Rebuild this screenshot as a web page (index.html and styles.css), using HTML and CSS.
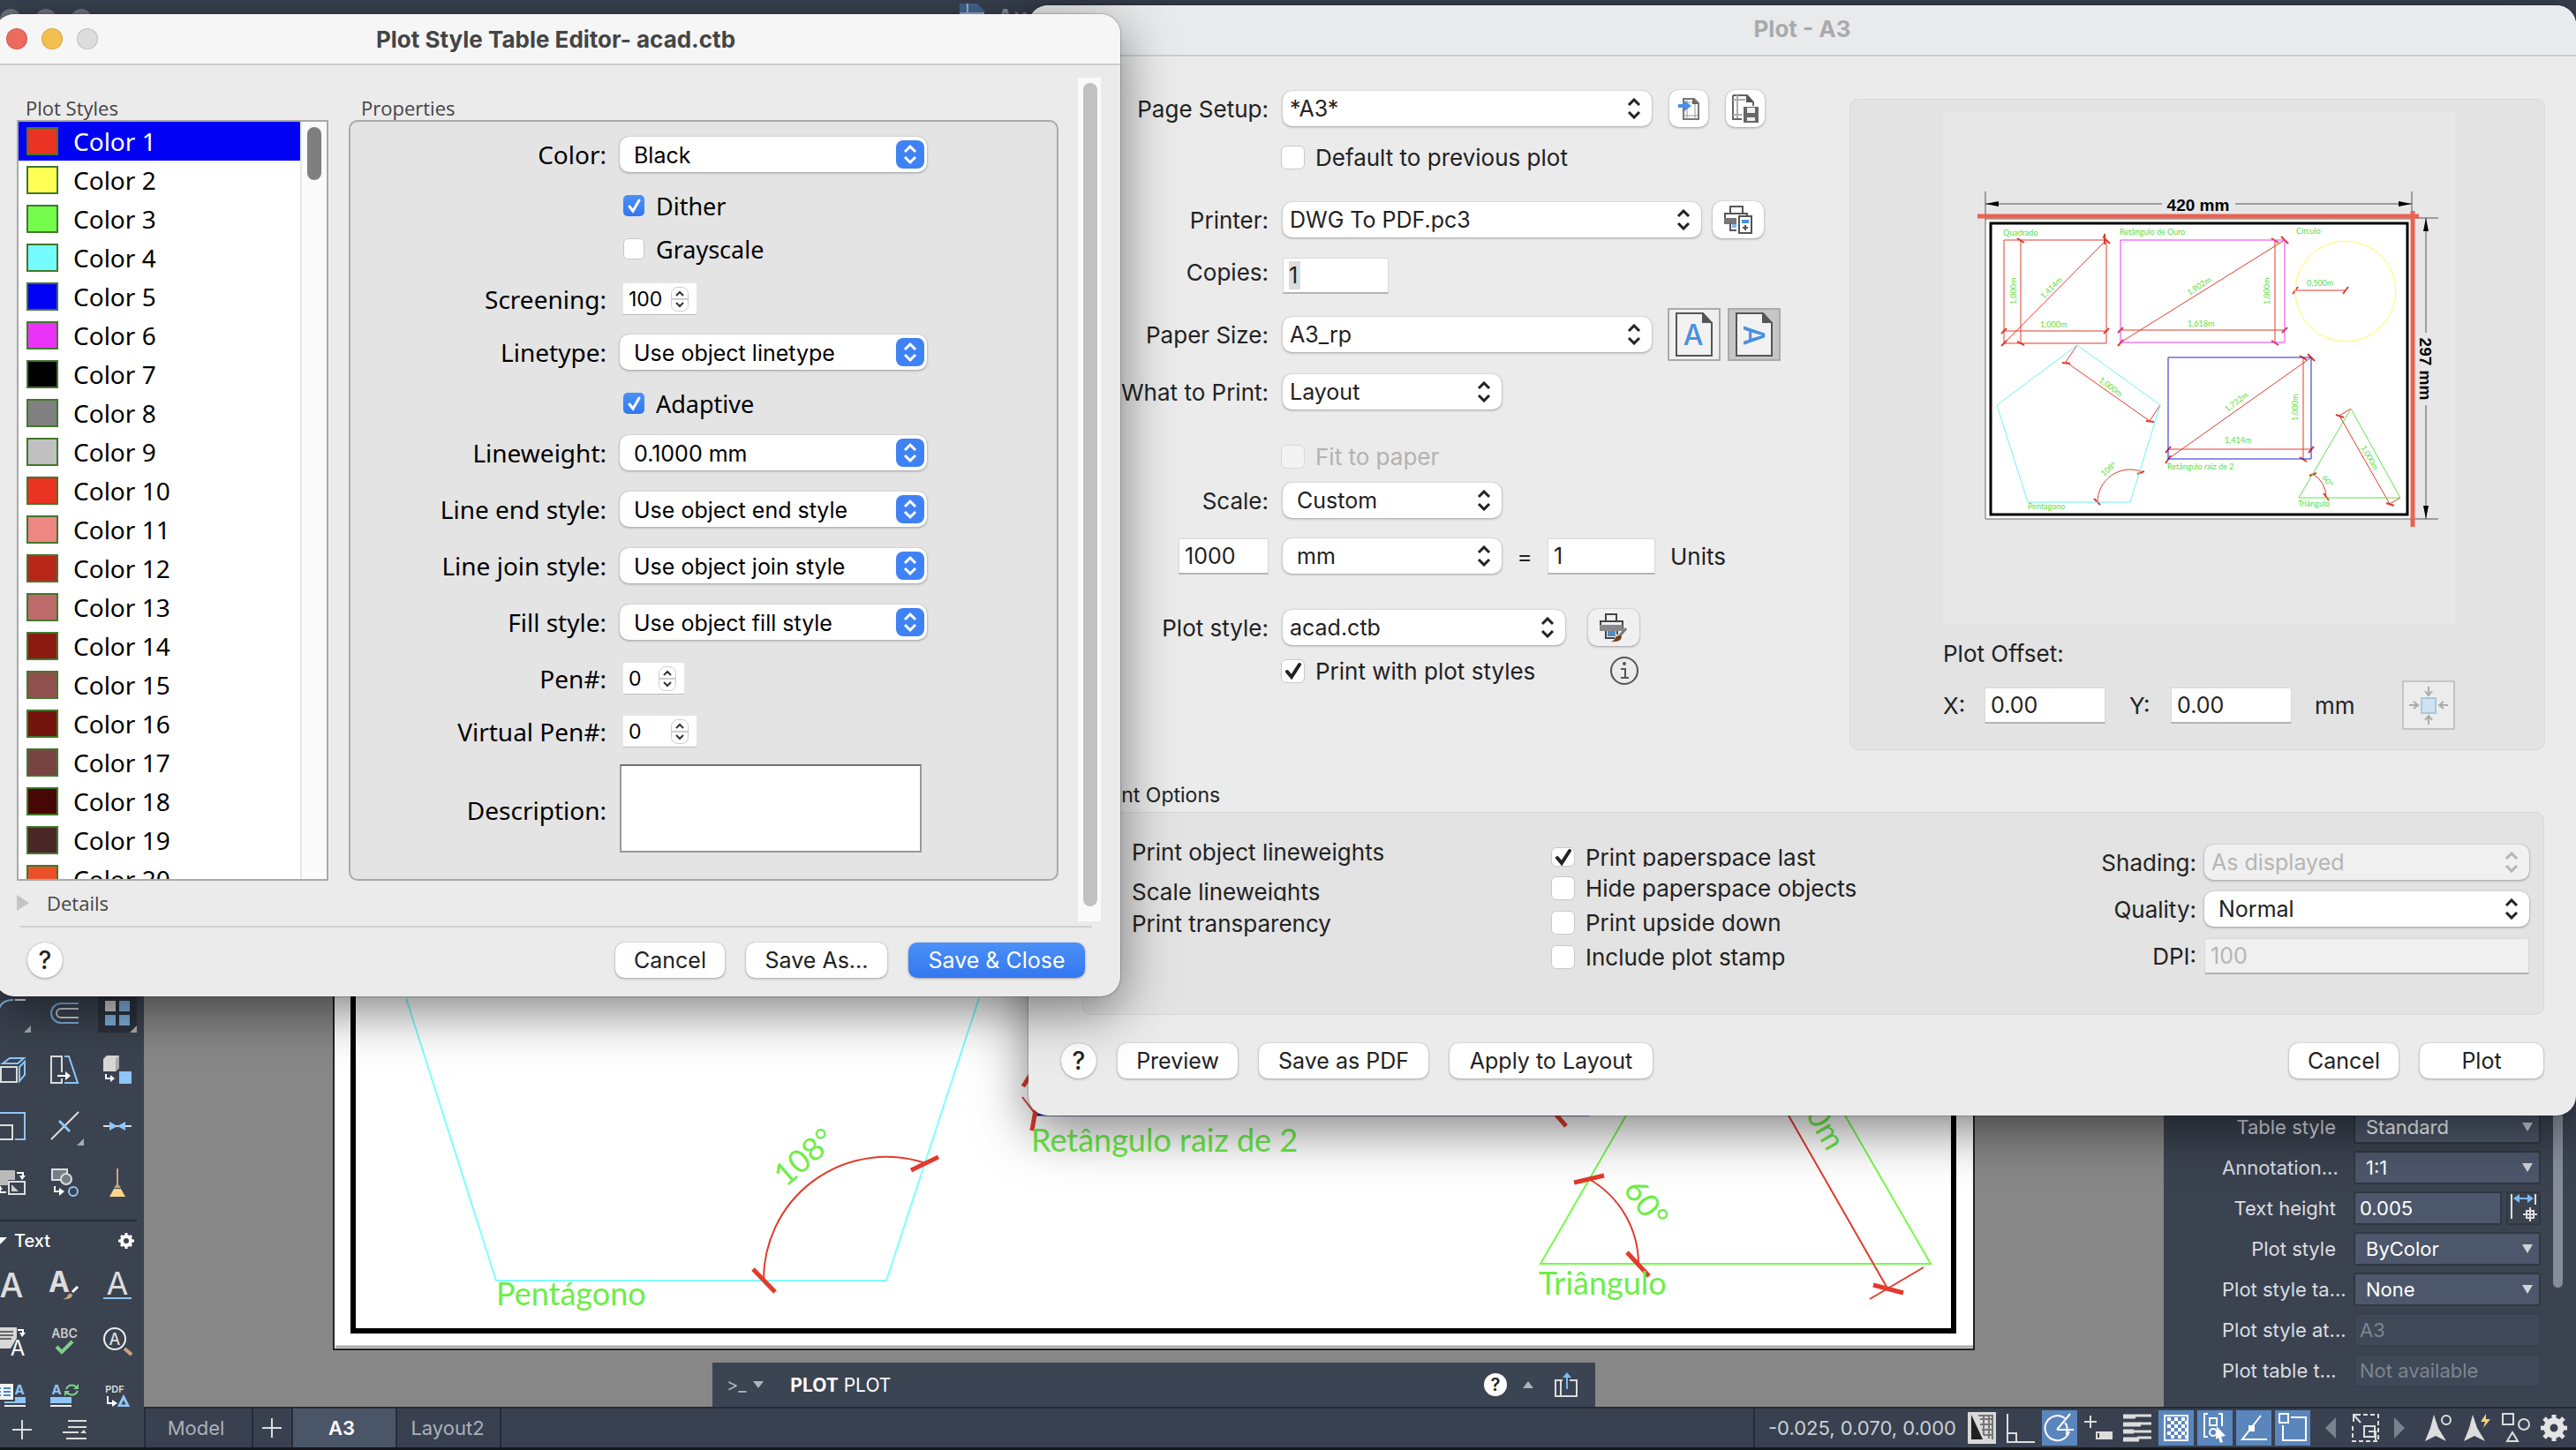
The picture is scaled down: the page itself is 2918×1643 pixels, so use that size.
FILE: index.html
```html
<!DOCTYPE html>
<html lang="en">
<head>
<meta charset="utf-8">
<title>Plot Style Table Editor - acad.ctb</title>
<link rel="stylesheet" href="styles.css">
</head>
<body>
<div class="app">
  <header class="app-title">
    <span class="app-dots"><i></i><i></i><i></i></span>
    <span class="app-doc"><svg width="28" height="24" viewBox="0 0 28 24"><path d="M0 0h20l8 8v16H0z" fill="#46658f"/><path d="M9 0v24M0 11h28" stroke="#9fb3cc" stroke-width="2"/></svg>Au</span>
  </header>

  <aside class="palette">
    <div class="tools tools-modify">
      <button type="button" class="tool" aria-label="Fillet"><svg viewBox="0 0 32 32"><path d="M1 16Q2 1 18 1" fill="none" stroke="#8bbdec" stroke-width="2"/><path d="M20 1h12" stroke="#ddd" stroke-width="2"/><path d="M38 30v8h-8z" fill="#a9acb1"/></svg></button>
      <button type="button" class="tool" aria-label="Offset"><svg viewBox="0 0 32 32"><path d="M32 5H12a11 11 0 0 0 0 22h20" fill="none" stroke="#7fb0df" stroke-width="2"/><path d="M32 11H12a5 5 0 0 0 0 10h20" fill="none" stroke="#ccc" stroke-width="2"/></svg></button>
      <button type="button" class="tool tool-on" aria-label="Array"><svg viewBox="0 0 32 32"><path d="M2 2h12v12H2z" fill="#ccc"/><path d="M18 2h12v12H18zM2 18h12v12H2zM18 18h12v12H18z" fill="#7fb0df"/><path d="M38 30v8h-8z" fill="#a9acb1"/></svg></button>
      <button type="button" class="tool" aria-label="Extrude"><svg viewBox="0 0 32 32" fill="none" stroke-width="2"><path d="M4 13h18v17H4z" stroke="#ddd"/><path d="M6 9l8-6h16l-7 6zM25 13l6-6v15l-6 7z" stroke="#8ec6f8"/></svg></button>
      <button type="button" class="tool" aria-label="Stretch"><svg viewBox="0 0 32 32" fill="none" stroke-width="2"><path d="M13 19V1H1v30h12v-5" stroke="#ddd"/><path d="M16 1h5l10 30H16" stroke="#8ec6f8"/><path d="M8 23h11" stroke="#fff"/><path d="M17 18l6 5-6 5z" fill="#fff"/></svg></button>
      <button type="button" class="tool" aria-label="Convert solid"><svg viewBox="0 0 32 32"><path d="M0 4l4-4h14v14l-4 4H0z" fill="#d8d8d8"/><path d="M14 18V4l4-4v14z" fill="#aaa"/><path d="M18 18h14v14H18z" fill="#8ec6f8"/><path d="M3 21v5h6" fill="none" stroke="#fff" stroke-width="2"/><path d="M8 22l5 4-5 4z" fill="#fff"/></svg></button>
      <button type="button" class="tool" aria-label="Scale"><svg viewBox="0 0 32 32" fill="none" stroke-width="2"><path d="M1 1h30v30H20" stroke="#8ec6f8"/><path d="M1 15h16v16H1z" stroke="#ddd"/></svg></button>
      <button type="button" class="tool" aria-label="Break"><svg viewBox="0 0 32 32"><path d="M1 31L32 0" stroke="#ddd" stroke-width="2"/><path d="M10 10l12 12" stroke="#8ec6f8" stroke-width="3"/><path d="M38 30v8h-8z" fill="#a9acb1"/></svg></button>
      <button type="button" class="tool" aria-label="Join"><svg viewBox="0 0 32 32"><path d="M0 16h32" stroke="#ddd" stroke-width="2"/><path d="M7 11l9 5-9 5zM25 11l-9 5 9 5z" fill="#8ec6f8"/></svg></button>
      <button type="button" class="tool" aria-label="Change space"><svg viewBox="0 0 32 32"><path d="M0 2h20v11h-8v6H0z" fill="#bbb"/><path d="M13 15h18v14H13z" fill="none" stroke="#ddd" stroke-width="2"/><path d="M16 18v8h8z" fill="#ccc"/><path d="M22 5h7v4M10 27H3v-4" fill="none" stroke="#fff" stroke-width="2"/><path d="M25 8h7l-4 5zM0 24h6l-3-5z" fill="#fff"/></svg></button>
      <button type="button" class="tool" aria-label="Copy nested"><svg viewBox="0 0 32 32" fill="none" stroke-width="2"><path d="M2 1h17v12H2z" fill="#777c85" stroke="#ddd"/><circle cx="18" cy="12" r="6" fill="#777c85" stroke="#ddd"/><circle cx="26" cy="26" r="5" stroke="#8ec6f8"/><path d="M5 20v6h6" stroke="#fff"/><path d="M10 22l6 4-6 5z" fill="#fff"/></svg></button>
      <button type="button" class="tool" aria-label="Purge"><svg viewBox="0 0 32 32"><path d="M15 0h2v18l3 4h-8l3-4z" fill="#c9a67a"/><path d="M12 23h8l5 9H7z" fill="#fbd38b"/></svg></button>
    </div>
    <div class="palette-head"><span class="tri-down"></span><span>Text</span>
      <button type="button" class="gear" aria-label="Text settings"><svg viewBox="0 0 20 20"><circle cx="10" cy="10" r="5" fill="none" stroke="#fff" stroke-width="4"/><path d="M10 1v4M10 15v4M1 10h4M15 10h4M4 4l2 2M14 14l2 2M4 16l2-2M14 6l2-2" stroke="#fff" stroke-width="3"/></svg></button>
    </div>
    <div class="tools tools-text">
      <button type="button" class="tool" aria-label="Multiline text"><svg viewBox="0 0 32 32"><text x="16" y="30" text-anchor="middle" font-size="38" font-weight="500" fill="#ddd">A</text></svg></button>
      <button type="button" class="tool" aria-label="Text style"><svg viewBox="0 0 32 32"><text x="10" y="24" text-anchor="middle" font-size="32" font-weight="700" fill="#ddd">A</text><path d="M31 18l-6 6" stroke="#fff" stroke-width="3"/><path d="M14 32q5-1 6-5 3-3 5 0 0 6-11 5z" fill="#c9a67a"/></svg></button>
      <button type="button" class="tool" aria-label="Single line text"><svg viewBox="0 0 32 32"><text x="16" y="27" text-anchor="middle" font-size="36" fill="#ddd">A</text><path d="M0 31h32" stroke="#8ec6f8" stroke-width="2"/></svg></button>
      <button type="button" class="tool" aria-label="Convert to text"><svg viewBox="0 0 32 32"><path d="M0 0h22v12l-7 12H0z" fill="#d8d8d8"/><path d="M3 5h15M3 9h15M3 13h13" stroke="#666" stroke-width="2"/><text x="23" y="32" text-anchor="middle" font-size="24" fill="#fff">A</text><path d="M23 3h6v4" fill="none" stroke="#fff" stroke-width="2"/><path d="M25 6h7l-4 5z" fill="#fff"/></svg></button>
      <button type="button" class="tool" aria-label="Spell check"><svg viewBox="0 0 32 32"><text x="16" y="12" text-anchor="middle" font-size="14" font-weight="600" fill="#ccc">ABC</text><path d="M7 22l6 6 12-12" fill="none" stroke="#7fd08a" stroke-width="4"/></svg></button>
      <button type="button" class="tool" aria-label="Find text"><svg viewBox="0 0 32 32"><circle cx="13" cy="13" r="12" fill="none" stroke="#eee" stroke-width="2"/><path d="M24 24l8 7" stroke="#c9a67a" stroke-width="4"/><text x="13" y="20" text-anchor="middle" font-size="18" font-weight="500" fill="#ddd">A</text></svg></button>
      <button type="button" class="tool" aria-label="Text list"><svg viewBox="0 0 32 32"><path d="M0 0h18v18H0z" fill="#f3f3f3"/><path d="M2 5h2M2 9h2M2 13h2M7 5h8M7 9h8M7 13h8" stroke="#4a86c8" stroke-width="2"/><text x="25" y="12" text-anchor="middle" font-size="15" font-weight="700" fill="#8ec6f8">A</text><path d="M8 20h12v-5h12v7H8z" fill="#8ec6f8"/><path d="M8 25h24" stroke="#eee" stroke-width="2"/></svg></button>
      <button type="button" class="tool" aria-label="Update text"><svg viewBox="0 0 32 32"><text x="7" y="12" text-anchor="middle" font-size="15" font-weight="700" fill="#8ec6f8">A</text><path d="M0 15h24v7H0z" fill="#8ec6f8"/><path d="M0 25h24" stroke="#eee" stroke-width="2"/><path d="M18 6q3-6 9-4l3 2M31 8q-3 6-9 4l-4-2" fill="none" stroke="#7fd08a" stroke-width="2"/><path d="M32 0v6h-6zM16 14V8h6z" fill="#7fd08a"/></svg></button>
      <button type="button" class="tool" aria-label="Import PDF text"><svg viewBox="0 0 32 32"><text x="13" y="10" text-anchor="middle" font-size="11" font-weight="600" fill="#ddd">PDF</text><path d="M5 14v8h7" fill="none" stroke="#fff" stroke-width="2"/><path d="M10 18l6 4-6 4z" fill="#fff"/><path d="M23 15l5 10H18z" fill="none" stroke="#8ec6f8" stroke-width="3"/></svg></button>
    </div>
    <div class="palette-foot">
      <button type="button" class="tool" aria-label="Add palette"><svg viewBox="0 0 32 32"><path d="M16 5v22M5 16h22" stroke="#ddd" stroke-width="2"/></svg></button>
      <button type="button" class="tool" aria-label="Palette list"><svg viewBox="0 0 32 32"><path d="M8 6h21M8 13h21M2 19h18M6 26h23" stroke="#ddd" stroke-width="2"/><path d="M22 20h7l-3-4z" fill="#ddd"/></svg></button>
    </div>
  </aside>

  <main class="canvas">
    <svg class="sheet" viewBox="163 28 2288 1566" preserveAspectRatio="xMinYMax meet">
      <path d="M378 28h1858v1501H378z" fill="#fff" stroke="#222" stroke-width="2"/>
      <path d="M380 1526h1855" stroke="#aaa" stroke-width="3"/>
      <path d="M400 28v1480h1813V28" fill="none" stroke="#000" stroke-width="6"/>
      <g fill="none" stroke="#7dffff" stroke-width="2"><path d="M460 1131L562 1451H1004L1109 1131"/></g>
      <g fill="none" stroke="#75fb4c" stroke-width="2"><path d="M1842 1264L1745 1432H2187L2090 1264"/></g>
      <path d="M1172 1263H1800" stroke="#22a" stroke-width="3"/>
      <g fill="none" stroke="#e23a2c" stroke-width="2">
        <path d="M865 1451A139 139 0 0 1 1048 1318"/>
        <path d="M1800 1336A111 111 0 0 1 1856 1432"/>
        <path d="M2026 1264L2137 1458M2118 1472L2179 1436M1158 1243L1174 1264"/>
      </g>
      <path d="M853 1438l25 26M1032 1326l31-15M1783 1340l34-8M1843 1419l25 27M2122 1456l34 9M1159 1231l10-16M1173 1258l-4 23M1760 1260l14 16" stroke="#e23a2c" stroke-width="5"/>
      <g class="cad-text">
        <text x="562" y="1479">Pentágono</text>
        <text x="1168" y="1305">Retângulo raiz de 2</text>
        <text x="1743" y="1467">Triângulo</text>
        <text x="890" y="1346" transform="rotate(-41 890 1346)">108°</text>
        <text x="1838" y="1348" transform="rotate(54 1838 1348)">60°</text>
        <text x="2070" y="1306" transform="rotate(60 2070 1306)" text-anchor="end">1,000m</text>
      </g>
    </svg>
    <div class="command">
      <span class="prompt">&gt;_</span><span class="caret caret-down"></span>
      <span class="command-text"><b>PLOT</b> PLOT</span>
      <button type="button" class="command-help" aria-label="Help">?</button>
      <span class="caret caret-up"></span>
      <button type="button" class="plain" aria-label="Expand history"><svg width="26" height="30" viewBox="0 0 26 30" fill="none" stroke="#ddd" stroke-width="2"><path d="M9 10H1v18h24V10h-8"/><path d="M7 10v18"/><path d="M14 20V6" stroke="#7db9f2" stroke-width="2"/><path d="M9 7l5-6 5 6z" fill="#7db9f2" stroke="none"/></svg></button>
    </div>
  </main>

  <aside class="side">
    <form class="side-form">
      <label for="s1">Table style</label><select id="s1"><option>Standard</option></select>
      <label for="s2">Annotation...</label><select id="s2"><option>1:1</option></select>
      <label for="s3">Text height</label><span class="side-pair"><input id="s3" value="0.005"><button type="button" aria-label="Pick height"><svg width="32" height="34" viewBox="0 0 32 34" fill="none" stroke="#ddd" stroke-width="2"><path d="M2 1v28M29 1v12M15 24h16M23 16v16M19 20h8v8h-8z"/><path d="M6 6h19" stroke="#7db9f2"/><path d="M11 1L4 6l7 5zM20 1l7 5-7 5z" fill="#7db9f2" stroke="none"/></svg></button></span>
      <label for="s4">Plot style</label><select id="s4"><option>ByColor</option></select>
      <label for="s5">Plot style ta...</label><select id="s5"><option>None</option></select>
      <label for="s6">Plot style at...</label><input id="s6" value="A3" disabled>
      <label for="s7">Plot table t...</label><input id="s7" value="Not available" disabled>
    </form>
    <div class="side-scroll"></div>
  </aside>

  <footer class="status">
    <nav class="tabs">
      <button type="button" class="tab tab-model">Model</button>
      <button type="button" class="tab tab-add" aria-label="New layout"><svg width="24" height="24" viewBox="0 0 24 24"><path d="M12 1v22M1 12h22" stroke="#ddd" stroke-width="2"/></svg></button>
      <button type="button" class="tab tab-current">A3</button>
      <button type="button" class="tab">Layout2</button>
    </nav>
    <output class="coords">-0.025, 0.070, 0.000</output>
    <div class="toggles">
      <button type="button" aria-label="Grid"><svg viewBox="0 0 32 36"><path d="M0 0h32v36H0z" fill="#d8d8d8"/><path d="M4 3v28h13z" fill="#222"/><path d="M14 8h14M14 14h14M16 20h12M18 26h10M18 4v22M24 4v26M12 4h16v27" fill="none" stroke="#777" stroke-width="2"/></svg></button>
      <button type="button" aria-label="Ortho"><svg viewBox="0 0 32 36" fill="none" stroke="#ddd" stroke-width="2"><path d="M1 2v32h31M1 24h10v10"/></svg></button>
      <button type="button" class="on" aria-label="Polar"><svg viewBox="0 0 32 36" fill="none" stroke="#fff" stroke-width="2"><path d="M22 7A14 14 0 1 0 27 22M13 20L28 2M13 20h19M22 12q4 4 2 14"/></svg></button>
      <button type="button" aria-label="Dynamic input"><svg viewBox="0 0 32 36"><path d="M7 4v14M0 11h14" stroke="#ddd" stroke-width="2"/><path d="M13 22h19v9H13z" fill="#ddd"/><path d="M16 24v5" stroke="#444" stroke-width="2"/></svg></button>
      <button type="button" aria-label="Lineweight"><svg viewBox="0 0 32 36" fill="none" stroke="#ddd"><path d="M0 5h14M0 14h20M0 22h12M0 31h18" stroke-width="5"/><path d="M14 4h18M18 13h14M12 22h20M16 29h16" stroke-width="3"/></svg></button>
      <button type="button" class="on" aria-label="Transparency"><svg viewBox="0 0 32 36" fill="none" stroke="#fff" stroke-width="2"><path d="M3 4h26v28H3z"/><path d="M6 8h20M10 12h20M6 16h20M10 20h18M6 24h20M10 28h18" stroke-width="4" stroke-dasharray="4 4"/></svg></button>
      <button type="button" class="on" aria-label="Selection cycling"><svg viewBox="0 0 32 36" fill="none" stroke="#fff" stroke-width="2"><path d="M8 2H4v26h4M20 2h4v14M10 7h8v8h-8z"/><circle cx="14" cy="23" r="4"/><path d="M18 16l10 11-5 1 2 6-3 1-2-6-3 2z" fill="#fff" stroke="none"/></svg></button>
      <button type="button" class="on" aria-label="Object snap tracking"><svg viewBox="0 0 32 36" fill="none" stroke="#fff" stroke-width="2"><path d="M24 4L3 31h28"/><path d="M10 15h7v7h-7z" fill="#fff" stroke="none"/></svg></button>
      <button type="button" class="on" aria-label="Object snap"><svg viewBox="0 0 32 36" fill="none" stroke="#fff" stroke-width="2"><path d="M1 2h10v10H1zM14 6h17v26H5V15"/></svg></button>
      <button type="button" class="narrow" aria-label="Previous scale"><svg viewBox="0 0 12 36"><path d="M12 6v24L0 18z" fill="#7a818d"/></svg></button>
      <button type="button" class="wide" aria-label="Annotation scale"><svg viewBox="0 0 32 36" fill="none" stroke="#ddd" stroke-width="2"><path d="M14 3h17v30H2V14" stroke-dasharray="5 3"/><path d="M3 3l8 9M3 11V3h8M15 16h12v12H15zM20 22h8v10"/></svg></button>
      <button type="button" class="narrow" aria-label="Next scale"><svg viewBox="0 0 12 36"><path d="M0 6v24l12-12z" fill="#7a818d"/></svg></button>
      <button type="button" aria-label="Annotation visibility"><svg viewBox="0 0 32 36"><path d="M12 3l5 15 9 15-12-6-12 6 6-15z" fill="#ddd"/><ellipse cx="26" cy="9" rx="5" ry="5" fill="none" stroke="#ddd" stroke-width="2"/></svg></button>
      <button type="button" aria-label="Auto scale"><svg viewBox="0 0 32 36"><path d="M12 3l5 15 9 15-12-6-12 6 6-15z" fill="#ddd"/><path d="M27 2l-6 9h5l-2 7 8-10h-5z" fill="#f7cf7a"/></svg></button>
      <button type="button" aria-label="Isolate"><svg viewBox="0 0 32 36" fill="none" stroke="#ddd" stroke-width="2"><path d="M2 2h12v12H2zM13 23l6 10H7z"/><circle cx="26" cy="14" r="6"/></svg></button>
      <button type="button" aria-label="Settings"><svg viewBox="0 0 32 36"><circle cx="16" cy="18" r="8" fill="none" stroke="#e4e4e4" stroke-width="7"/><path d="M16 3v6M16 27v6M1 18h6M25 18h6M5 7l5 5M22 24l5 5M5 29l5-5M22 12l5-5" stroke="#e4e4e4" stroke-width="5"/></svg></button>
    </div>
  </footer>
  <div class="edge"></div>
</div>

<section class="window plot" aria-label="Plot - A3">
  <h1 class="bar bar-dim">Plot - A3</h1>
  <div class="plot-top">
    <form class="plot-form">
      <label class="lab" for="p1">Page Setup:</label>
      <div class="line"><select id="p1" class="w-l"><option>*A3*</option></select>
        <button type="button" class="sq gap-l" aria-label="Import setup"><svg width="24" height="28" viewBox="0 0 24 28" fill="none"><path d="M6 3h12l5 5v18H6z" stroke="#777" stroke-width="2"/><path d="M6 7h10M6 22h16M10 3v23M19 8v18" stroke="#999"/><path d="M16 2l7 7h-7z" fill="#666"/><path d="M0 11h8" stroke="#4a90e2" stroke-width="4"/><path d="M7 5l8 6-8 6z" fill="#4a90e2"/></svg></button>
        <button type="button" class="sq gap-l" aria-label="Save setup"><svg width="30" height="32" viewBox="0 0 30 32" fill="none"><path d="M1 1h16l7 8v4M1 1v27h10" stroke="#666" stroke-width="2"/><path d="M6 1v26M1 6h14M1 23h10" stroke="#aaa" stroke-width="2"/><path d="M16 0l9 9h-9z" fill="#555"/><path d="M13 14h17v18H13z" fill="#666"/><path d="M17 15h9v6h-9zM17 26h9v4h-9z" fill="#eee"/></svg></button></div>
      <div class="line row2"><label class="check"><input type="checkbox">Default to previous plot</label></div>
      <label class="lab" for="p2">Printer:</label>
      <div class="line"><select id="p2" class="w-xl"><option>DWG To PDF.pc3</option></select>
        <button type="button" class="sq sq-w gap-m" aria-label="Printer properties"><svg width="34" height="32" viewBox="0 0 34 32" fill="none"><path d="M8 9V1h14v8M2 20V9h25v3" stroke="#555" stroke-width="2"/><path d="M1 14h14v7H1z" fill="#777"/><path d="M8 20v8h7" stroke="#555" stroke-width="2"/><path d="M10 21h5v4h-5z" fill="#7db9f2"/><path d="M18 12h14v19H18z" stroke="#555" stroke-width="2" fill="#fff"/><path d="M21 16h8v4h-8z" fill="#4a90e2"/><path d="M25 22v6M22 25h6" stroke="#555" stroke-width="2"/></svg></button></div>
      <label class="lab lab-high" for="p3">Copies:</label>
      <div class="line"><span class="field w-copies"><input id="p3" class="copies" value="1" size="1"></span></div>
      <label class="lab" for="p4">Paper Size:</label>
      <div class="line"><select id="p4" class="w-l"><option>A3_rp</option></select>
        <button type="button" class="orient gap-p" aria-label="Portrait"><svg width="42" height="50" viewBox="0 0 42 50"><path d="M1 1h30l10 11v37H1z" fill="#f2f2f2" stroke="#555" stroke-width="2"/><path d="M30 0l12 12H30z" fill="#555"/><text x="20" y="37" text-anchor="middle" font-size="32" font-weight="500" fill="#4a8fdf">A</text></svg></button>
        <button type="button" class="orient orient-on gap-s" aria-label="Landscape" aria-pressed="true"><svg width="42" height="50" viewBox="0 0 42 50"><path d="M1 1h30l10 11v37H1z" fill="#f2f2f2" stroke="#555" stroke-width="2"/><path d="M30 0l12 12H30z" fill="#555"/><text x="9" y="26" transform="rotate(90 9 26)" text-anchor="middle" font-size="32" font-weight="500" fill="#4a8fdf">A</text></svg></button></div>
      <label class="lab" for="p5">What to Print:</label>
      <div class="line"><select id="p5" class="w-m"><option>Layout</option></select></div>
      <div class="line row2"><label class="check dim"><input type="checkbox" disabled>Fit to paper</label></div>
      <label class="lab" for="p6">Scale:</label>
      <div class="line"><select id="p6" class="w-m popup"><option>Custom</option></select></div>
      <div class="lab"><input class="w-1000" aria-label="Paper units" value="1000"></div>
      <div class="line"><select class="w-m popup" aria-label="Unit"><option>mm</option></select><span class="eq">=</span><input id="p7" class="w-units" value="1"><label for="p7" class="units">Units</label></div>
      <label class="lab" for="p8">Plot style:</label>
      <div class="line"><select id="p8" class="w-style"><option>acad.ctb</option></select>
        <button type="button" class="sq sq-w sq-pressed" aria-label="Edit plot style"><svg width="34" height="32" viewBox="0 0 34 32" fill="none"><path d="M8 9V1h12v8M2 18V9h25v9" stroke="#444" stroke-width="2"/><path d="M1 13h26v7H1z" fill="#888"/><path d="M8 20v8h10M21 20v4" stroke="#444" stroke-width="2"/><path d="M10 20h9v6h-9z" fill="#4f8cc4"/><path d="M31 17l-7 8" stroke="#777" stroke-width="3"/><path d="M14 32q4-1 5-5 4-4 7-1 0 7-12 6z" fill="#75431a"/></svg></button></div>
      <div class="line row2"><label class="check"><input type="checkbox" checked>Print with plot styles</label>
        <button type="button" class="info" aria-label="Information"><svg width="32" height="32" viewBox="0 0 32 32" fill="none" stroke="#555"><circle cx="16" cy="16" r="15" stroke-width="2"/><path d="M12 14h5v10M12 24h9" stroke-width="2"/><circle cx="16" cy="8" r="2" fill="#555" stroke="none"/></svg></button></div>
    </form>

    <div class="preview">
      <svg class="preview-art" viewBox="0 0 580 580">
        <path d="M0 0h580v580H0z" fill="#e7e7e7"/>
        <path d="M48 121h483v340H48z" fill="#fff" stroke="#666"/>
        <path d="M54 126h472v330H54z" fill="none" stroke="#000" stroke-width="3"/>
        <g stroke="#555" fill="none"><path d="M48 90v31M531 90v31M48 104h200M331 104h200M531 120h30M531 461h30M547 120v130M547 332v129"/></g>
        <path d="M48 104l15-3v6zM531 104l-15-3v6zM547 120l-3 15h6zM547 461l-3-15h6z"/>
        <text class="dim-text" x="289" y="112">420 mm</text>
        <text class="dim-text" x="540" y="291" transform="rotate(90 540 291)">297 mm</text>
        <path d="M39 118h500M532 112v358" stroke="#ea6350" stroke-width="5" fill="none"/>
        <g fill="none" stroke="#e23a2c">
          <path d="M69 145h116v117H69zM88 145v117M69 248h116M69 262L185 145"/>
          <path d="M376 145v116M201 247h186M201 261L387 145M399 202h57"/>
          <path d="M152 264l-13 19 95 67 12-18"/>
          <path d="M408 278v115M255 382h162M255 393L417 278"/>
          <path d="M462 336l-13 8 57 100 12-7"/>
          <path d="M175 442a37 37 0 0 1 49-35M419 410a31 31 0 0 1 15 27"/>
          <path stroke-width="2" d="M84 143l8 5M84 260l8 4M66 251l6-6M182 251l6-6M66 265l6-6M181 141l8 8M183 138v12M372 143l8 5M372 259l8 5M198 250l6-6M384 250l6-6M198 265l6-7M383 141l8 8M396 206l6-8M453 206l6-8M135 284l9 1M230 350l9 1M404 276l8 5M404 391l8 5M252 386l6-7M414 386l6-7M252 398l6-9M413 274l8 8M445 343l9 3M502 443l9 3M171 438l7 7M220 410l8-3M415 412l8-3M431 432l6 8"/>
        </g>
        <path d="M201 145h186v116H201z" fill="none" stroke="#e63af2"/>
        <circle cx="456" cy="203" r="57" fill="none" stroke="#fdf95c"/>
        <path d="M152 264l94 68-34 110H96L61 332z" fill="none" stroke="#6ff3f5"/>
        <path d="M255 278h162v115H255z" fill="none" stroke="#22c"/>
        <path d="M462 336l56 101H403z" fill="none" stroke="#5de04a"/>
        <g class="mini-text">
          <text x="68" y="140">Quadrado</text><text x="200" y="139">Retângulo de Ouro</text><text x="400" y="138">Círculo</text>
          <text x="96" y="450">Pentágono</text><text x="254" y="405">Retângulo raiz de 2</text><text x="402" y="447">Triângulo</text>
          <text x="110" y="244">1,000m</text><text x="277" y="243">1,618m</text><text x="412" y="197">0,500m</text><text x="319" y="375">1,414m</text>
          <text x="83" y="218" transform="rotate(-90 83 218)">1,000m</text>
          <text x="370" y="218" transform="rotate(-90 370 218)">1,000m</text>
          <text x="402" y="350" transform="rotate(-90 402 350)">1,000m</text>
          <text x="114" y="212" transform="rotate(-45 114 212)">1,414m</text>
          <text x="279" y="208" transform="rotate(-33 279 208)">1,902m</text>
          <text x="322" y="340" transform="rotate(-37 322 340)">1,732m</text>
          <text x="176" y="305" transform="rotate(36 176 305)">1,000m</text>
          <text x="473" y="380" transform="rotate(60 473 380)">1,000m</text>
          <text x="182" y="413" transform="rotate(-40 182 413)">108°</text>
          <text x="429" y="414" transform="rotate(54 429 414)">60°</text>
        </g>
      </svg>
      <div class="offset-title">Plot Offset:</div>
      <div class="offset">
        <label for="ox">X:</label><input id="ox" value="0.00">
        <label for="oy" class="oy">Y:</label><input id="oy" value="0.00">
        <span class="mm">mm</span>
        <button type="button" class="center-btn" disabled aria-label="Center plot"><svg width="48" height="44" viewBox="0 0 48 44" fill="none" stroke="#aaa" stroke-width="2"><path d="M16 14h16v17H16z" fill="#cfe2f0" stroke="#a6c9e2"/><path d="M24 1v9M20 6l4 5 4-5M24 44v-9M20 39l4-5 4 5M2 22h10M7 18l5 4-5 4M46 22H36M41 18l-5 4 5 4"/></svg></button>
      </div>
    </div>
  </div>

  <h2 class="options-title">Print Options</h2>
  <div class="options">
    <ul class="opt-a">
      <li>Print object lineweights</li>
      <li class="cut-a">Scale lineweights</li>
      <li>Print transparency</li>
    </ul>
    <div class="opt-b">
      <label class="check cut-b"><input type="checkbox" checked>Print paperspace last</label>
      <label class="check"><input type="checkbox">Hide paperspace objects</label>
      <label class="check"><input type="checkbox">Print upside down</label>
      <label class="check"><input type="checkbox">Include plot stamp</label>
    </div>
    <div class="opt-c">
      <label for="q1">Shading:</label><select id="q1" disabled><option>As displayed</option></select>
      <label for="q2">Quality:</label><select id="q2" class="popup"><option>Normal</option></select>
      <label for="q3">DPI:</label><input id="q3" value="100" disabled>
    </div>
  </div>

  <div class="actions plot-actions">
    <button type="button" class="help" aria-label="Help">?</button>
    <button type="button" class="btn b-136">Preview</button>
    <button type="button" class="btn b-192">Save as PDF</button>
    <button type="button" class="btn b-230">Apply to Layout</button>
    <button type="button" class="btn b-124 push">Cancel</button>
    <button type="button" class="btn b-140">Plot</button>
  </div>
</section>

<section class="window editor" aria-label="Plot Style Table Editor">
  <header class="bar">
    <span class="dots"><button type="button" class="dot dot-r" aria-label="Close"></button><button type="button" class="dot dot-y" aria-label="Minimize"></button><button type="button" class="dot dot-g" aria-label="Zoom" disabled></button></span>
    <span class="bar-title">Plot Style Table Editor- acad.ctb</span>
  </header>
  <div class="editor-body">
    <div class="editor-main">
      <div class="groups">
        <div class="group">
          <div class="group-title" id="styles-title">Plot Styles</div>
          <div class="list-box">
            <ul class="list" role="listbox" aria-labelledby="styles-title">
              <li role="option" aria-selected="true"><i style="background:#ea3323"></i>Color 1</li>
              <li role="option"><i style="background:#ffff54"></i>Color 2</li>
              <li role="option"><i style="background:#75fb4c"></i>Color 3</li>
              <li role="option"><i style="background:#75fbfd"></i>Color 4</li>
              <li role="option"><i style="background:#0000f5"></i>Color 5</li>
              <li role="option"><i style="background:#ea33f7"></i>Color 6</li>
              <li role="option"><i style="background:#000000"></i>Color 7</li>
              <li role="option"><i style="background:#808080"></i>Color 8</li>
              <li role="option"><i style="background:#c0c0c0"></i>Color 9</li>
              <li role="option"><i style="background:#ea3323"></i>Color 10</li>
              <li role="option"><i style="background:#ee8683"></i>Color 11</li>
              <li role="option"><i style="background:#b9271b"></i>Color 12</li>
              <li role="option"><i style="background:#bd6b68"></i>Color 13</li>
              <li role="option"><i style="background:#8b1a10"></i>Color 14</li>
              <li role="option"><i style="background:#8f504e"></i>Color 15</li>
              <li role="option"><i style="background:#75140c"></i>Color 16</li>
              <li role="option"><i style="background:#784341"></i>Color 17</li>
              <li role="option"><i style="background:#460804"></i>Color 18</li>
              <li role="option"><i style="background:#482726"></i>Color 19</li>
              <li role="option"><i style="background:#eb5128"></i>Color 20</li>
            </ul>
            <div class="track"><div class="thumb"></div></div>
          </div>
        </div>
        <div class="group group-props">
          <div class="group-title">Properties</div>
          <form class="props">
            <label class="lab" for="e1">Color:</label><select id="e1"><option>Black</option></select>
            <label class="check"><input type="checkbox" checked>Dither</label>
            <label class="check"><input type="checkbox">Grayscale</label>
            <label class="lab" for="e2">Screening:</label><input id="e2" class="spin" type="text" role="spinbutton" value="100">
            <label class="lab" for="e3">Linetype:</label><select id="e3"><option>Use object linetype</option></select>
            <label class="check"><input type="checkbox" checked>Adaptive</label>
            <label class="lab" for="e4">Lineweight:</label><select id="e4"><option>0.1000 mm</option></select>
            <label class="lab" for="e5">Line end style:</label><select id="e5"><option>Use object end style</option></select>
            <label class="lab" for="e6">Line join style:</label><select id="e6"><option>Use object join style</option></select>
            <label class="lab" for="e7">Fill style:</label><select id="e7"><option>Use object fill style</option></select>
            <label class="lab" for="e8">Pen#:</label><input id="e8" class="spin spin-s" type="text" role="spinbutton" value="0">
            <label class="lab" for="e9">Virtual Pen#:</label><input id="e9" class="spin" type="text" role="spinbutton" value="0">
            <label class="lab lab-desc" for="e10">Description:</label><textarea id="e10"></textarea>
          </form>
        </div>
      </div>
      <div class="details"><span class="tri-right"></span>Details</div>
    </div>
    <div class="main-track"><div class="main-thumb"></div></div>
  </div>
  <hr class="rule">
  <div class="actions">
    <button type="button" class="help" aria-label="Help">?</button>
    <button type="button" class="btn b-124 push">Cancel</button>
    <button type="button" class="btn b-160">Save As...</button>
    <button type="button" class="btn b-200 primary">Save &amp; Close</button>
  </div>
</section>
</body>
</html>
```
FILE: styles.css
```css
* { box-sizing: border-box; }
html, body { margin: 0; height: 100%; overflow: hidden; }
body {
  position: relative;
  font-family: Inter, "Liberation Sans", sans-serif;
  font-size: 26px;
  color: #222;
  background: #394150;
  white-space: nowrap;
}
button, input, select, textarea { font: inherit; font-size: 25px; color: inherit; margin: 0; padding: 0; border: 0; border-radius: 0; appearance: none; outline: 0; }
button { background: none; display: flex; align-items: center; justify-content: center; flex: none; }
select, input { opacity: 1; }
ul { list-style: none; margin: 0; padding: 0; }
h1, h2 { margin: 0; font-size: inherit; }
svg { display: block; overflow: visible; }

/* application shell */
.app {
  height: 100%;
  display: grid;
  grid-template-columns: 163px minmax(0, 1fr) 467px;
  grid-template-rows: 28px minmax(0, 1fr) 46px 3px;
}
.app-title { grid-column: 1 / -1; background: #394150; display: flex; justify-content: space-between; overflow: hidden; }
.app-dots { display: flex; gap: 16px; padding-top: 10px; }
.app-dots i { width: 24px; height: 24px; border-radius: 50%; background: #6f747d; }
.app-doc { display: flex; gap: 14px; margin-right: 1754px; padding-top: 4px; color: #8d939d; font-weight: 600; }
.edge { grid-column: 1 / -1; background: #16171a; }

.palette { grid-row: 2 / 4; background: #3b4350; display: flex; flex-direction: column; justify-content: flex-end; overflow: hidden; }
.tools { display: grid; grid-template-columns: repeat(3, 60px); grid-auto-rows: 64px; margin-left: -17px; align-items: center; justify-items: center; flex: none; }
.tools-modify { padding-bottom: 10px; }
.tools-text { height: 170px; overflow: hidden; }
.tool { width: 44px; height: 44px; }
.tool svg { width: 32px; height: 32px; }
.tool-on { background: #2c323c; }
.palette-head { flex: none; height: 42px; margin-right: 8px; padding-top: 3px; border-top: 2px solid #262c37; display: flex; align-items: center; color: #fff; font-size: 20px; gap: 8px; font-weight: 500; }
.tri-down { border: 8px solid transparent; border-left-width: 0; border-top-color: #fff; border-bottom: 0; }
.gear { margin-left: auto; margin-right: 2px; }
.gear svg { width: 20px; height: 20px; }
.palette-foot { flex: none; height: 46px; display: flex; align-items: center; gap: 16px; padding-left: 3px; padding-top: 6px; }

.canvas { position: relative; background: #878787; overflow: hidden; }
.sheet { width: 100%; height: 100%; }
.cad-text { font-family: Lato, sans-serif; font-size: 36px; fill: #6cee48; }
.command { position: absolute; left: 644px; right: 644px; bottom: 0; height: 50px; background: #3b4452; display: flex; align-items: center; padding: 0 20px 0 16px; color: #fff; font-size: 20px; }
.prompt { color: #aeb3bb; }
.caret { border: 6px solid transparent; }
.caret-down { border-top: 8px solid #aeb3bb; border-bottom: 0; margin-left: 8px; }
.caret-up { border-bottom: 8px solid #aeb3bb; border-top: 0; margin: 0 24px 0 18px; }
.command-text { margin-left: 30px; font-size: 21px; }
.command-help { margin-left: auto; width: 26px; height: 26px; border-radius: 50%; background: #fff; color: #222; font-weight: 600; font-size: 20px; }

.side { background: #3b4350; display: flex; align-items: flex-end; overflow: hidden; color: #dadde2; font-size: 22px; }
.side-form { flex: 1; display: grid; grid-template-columns: 149px 1fr; grid-auto-rows: 46px; align-items: center; padding: 0 14px 18px 66px; }
.side-form label { justify-self: end; margin-right: 20px; min-width: 0; max-width: 129px; }
.side-form select, .side-form input { width: 100%; height: 38px; border: 2px solid #2f3743; border-radius: 3px; background-color: #4d576b; color: #fff; padding: 0 12px; font-size: 22px; }
.side-form select { background-image: url("data:image/svg+xml,%3Csvg xmlns='http://www.w3.org/2000/svg' width='12' height='10'%3E%3Cpath d='M0 0h12L6 10z' fill='%23d0d3d8'/%3E%3C/svg%3E"); background-repeat: no-repeat; background-position: right 7px center; }
.side-form input { padding: 0 5px; }
.side-form input:disabled { background: #3f4857; border-color: #39414e; color: #7c8492; }
.side-pair { display: flex; gap: 5px; }
.side-pair button { width: 39px; height: 38px; border: 2px solid #2f3743; border-radius: 3px; }
.side-scroll { width: 11px; margin-right: 15px; align-self: stretch; margin-bottom: 135px; border-radius: 6px; background: #858d9b; }

.status { grid-column: 2 / 4; background: #394150; border-top: 2px solid #242b37; display: flex; align-items: center; overflow: hidden; }
.tabs { display: flex; align-self: stretch; border-right: 2px solid #252c38; }
.tab { border: 2px solid #252c38; border-width: 0 0 0 2px; width: 118px; padding-right: 2px; color: #aab0ba; font-size: 22px; }
.tab-model { width: 122px; padding-right: 6px; }
.tab-add { width: 45px; }
.tab-current { background: #4a5568; color: #fff; font-weight: 600; padding-right: 6px; }
.coords { margin-left: auto; align-self: stretch; display: flex; align-items: center; border-left: 2px solid #252c38; padding: 0 9px 0 15px; font-size: 22px; color: #ccd0d6; }
.toggles { display: flex; gap: 4px; padding-right: 5px; }
.toggles button { width: 40px; height: 40px; }
.toggles svg { width: 32px; height: 36px; }
.toggles .on { background: #5b86bd; }
.toggles .narrow { width: 38px; }
.toggles .narrow svg { width: 12px; }
.toggles .wide { width: 32px; }

/* dialog windows */
.window { position: absolute; background: #ebebeb; border-radius: 22px; box-shadow: 0 0 2px rgba(0,0,0,.6), 0 16px 60px rgba(0,0,0,.5); display: flex; flex-direction: column; }
.plot { left: 1165px; right: 0; top: 6px; height: 1258px; }
.editor { left: -6px; width: 1275px; top: 16px; height: 1113px; }
.bar { height: 58px; flex: none; border-bottom: 2px solid #cdcdcd; border-radius: 22px 22px 0 0; background: #f6f6f6; display: grid; grid-template-columns: 1fr auto 1fr; align-items: center; font-weight: 700; font-size: 26px; color: #454545; }
.bar-title { padding-right: 4px; }
.bar-dim { display: flex; justify-content: center; color: #a9a9ab; background: #e9eaec; padding-bottom: 3px; }
.dots { display: flex; gap: 16px; padding-left: 13px; }
.dot { width: 24px; height: 24px; border-radius: 50%; border: 1px solid #0002; }
.dot-r { background: #ec6a5e; }
.dot-y { background: #f4bf4f; }
.dot-g { background: #dcdcdc; }

.actions { display: flex; align-items: center; gap: 24px; height: 40px; flex: none; }
.btn { height: 40px; border-radius: 10px; background: #fff; box-shadow: 0 0 1px rgba(0,0,0,.3), 0 1px 3px rgba(0,0,0,.3); }
.help { width: 40px; height: 40px; border-radius: 50%; background: #fff; box-shadow: 0 0 1px rgba(0,0,0,.3), 0 1px 3px rgba(0,0,0,.3); font-size: 28px; font-weight: 500; }
.push { margin-left: auto; }
.primary { background: linear-gradient(#4c90f8, #3377f0); color: #fff; }
.b-124 { width: 124px; }
.b-136 { width: 136px; }
.b-140 { width: 140px; }
.b-160 { width: 160px; }
.b-192 { width: 192px; }
.b-200 { width: 200px; }
.b-230 { width: 230px; }

.window select { height: 40px; border-radius: 10px; background-color: #fff; background-repeat: no-repeat; box-shadow: 0 0 1px rgba(0,0,0,.3), 0 1px 3px rgba(0,0,0,.3); }
.plot select { padding-left: 8px; background-image: url("data:image/svg+xml,%3Csvg xmlns='http://www.w3.org/2000/svg' width='16' height='24' fill='none' stroke='%23222' stroke-width='3'%3E%3Cpath d='M2 8l6-6 6 6M2 16l6 6 6-6'/%3E%3C/svg%3E"); background-position: right 12px center; }
.plot select.popup { padding-left: 16px; }
.plot select:disabled { background-color: #f0f0f0; color: #b5b5b5; background-image: url("data:image/svg+xml,%3Csvg xmlns='http://www.w3.org/2000/svg' width='16' height='24' fill='none' stroke='%23b5b5b5' stroke-width='3'%3E%3Cpath d='M2 8l6-6 6 6M2 16l6 6 6-6'/%3E%3C/svg%3E"); }
.plot input:not([type]) { height: 41px; background: #fff; border: 1px solid #d8d8d8; border-bottom: 2px solid #b4b4b4; padding: 0 6px; }
.plot input:not([type]):disabled { background: #f0f0f0; color: #b5b5b5; }

.check { display: flex; align-items: center; }
.check input { width: 27px; height: 27px; margin-right: 12px; border-radius: 6px; background: #fff; border: 1px solid #c9c9c9; flex: none; background-repeat: no-repeat; background-position: center; }
.check input:checked { background-image: url("data:image/svg+xml,%3Csvg xmlns='http://www.w3.org/2000/svg' width='20' height='20' fill='none' stroke='%23222' stroke-width='4' stroke-linecap='round'%3E%3Cpath d='M3 11l5 6L17 3'/%3E%3C/svg%3E"); }
.check input:disabled { background: #f3f3f3; border-color: #d9d9d9; }
.dim { color: #b2b2b2; }

/* plot dialog */
.plot-top { display: flex; justify-content: space-between; align-items: flex-start; padding: 39px 35px 0 0; }
.plot-form { display: grid; grid-template-columns: 272px auto; column-gap: 16px; grid-template-rows: 55px 71px 63px 67px 65px 73px 50px 63px 81px 49px; align-items: start; }
.lab { justify-self: end; height: 40px; display: flex; align-items: center; }
.lab-high { height: 32px; }
.line { height: 40px; display: flex; align-items: center; }
.row2 { grid-column: 2; margin-left: -2px; }
.w-l { width: 418px; }
.w-xl { width: 474px; }
.w-m { width: 248px; }
.w-style { width: 320px; margin-right: 26px; }
.w-1000 { width: 102px; }
.w-units { width: 122px; }
.field { background: #fff; border: 1px solid #d8d8d8; border-bottom: 2px solid #b4b4b4; height: 41px; display: flex; align-items: center; padding-left: 6px; }
.w-copies { width: 120px; }
.plot .field .copies { width: 13px; height: 32px; padding: 0; border: 0; background: #dcdcdc; }
.eq { width: 52px; text-align: center; }
.units { margin-left: 17px; }
.sq { width: 44px; height: 42px; border-radius: 10px; background: #fff; box-shadow: 0 0 1px rgba(0,0,0,.3), 0 1px 3px rgba(0,0,0,.3); }
.sq-w { width: 58px; }
.sq-pressed { background: #f0f0f0; }
.gap-s { margin-left: 8px; }
.gap-m { margin-left: 13px; }
.gap-p { margin-left: 18px; }
.gap-l { margin-left: 20px; }
.orient { width: 60px; height: 60px; border: 2px solid #aaa; background: #efefef; }
.orient-on { background: #c6c6c6; }
.info { margin-left: 85px; }

.preview { width: 788px; margin-top: 9px; padding: 14px 101px 22px 105px; border: 1px solid #d9d9d9; border-radius: 10px; background: #e3e3e3; }
.preview-art { width: 100%; aspect-ratio: 1; }
.offset-title { line-height: 32px; margin: 18px 0 14px; }
.offset { display: flex; align-items: center; height: 56px; }
.offset label { width: 47px; }
.offset .oy { margin-left: 27px; }
.offset input { width: 137px; }
.mm { margin-left: 26px; }
.center-btn { margin-left: auto; width: 60px; height: 56px; border: 2px solid #c4c4c4; background: #ececec; }
.dim-text { font-family: "Liberation Sans", sans-serif; font-weight: 700; font-size: 19px; text-anchor: middle; fill: #000; }
.mini-text { font-family: Lato, sans-serif; font-size: 9px; fill: #5be03a; }

.options-title { margin: 36px 0 4px 76px; line-height: 30px; font-weight: 400; font-size: 23px; }
.options { height: 230px; margin: 0 36px 0 60px; border: 1px solid #d9d9d9; border-radius: 10px; background: #e3e3e3; display: flex; flex: none; }
.opt-a { padding: 28px 0 0 56px; width: 531px; }
.opt-a li { height: 36px; line-height: 34px; }
.opt-a li:first-child { height: 45px; }
.opt-a .cut-a { height: 27px; line-height: 34px; overflow: hidden; margin-bottom: 9px; }
.opt-b { display: grid; grid-template-rows: 22px 30px 30px 30px; row-gap: 9px; padding-top: 39px; align-content: start; }
.opt-b .cut-b { height: 22px; line-height: 24px; overflow: hidden; align-items: flex-start; }
.cut-b input { height: 22px; }
.opt-c { margin-left: auto; display: grid; grid-template-columns: auto 368px; column-gap: 9px; grid-auto-rows: 40px; row-gap: 13px; padding: 36px 16px 0 0; align-content: start; align-items: center; justify-items: end; }
.opt-c select, .opt-c input { width: 368px; }
.plot-actions { margin-top: 32px; padding: 0 37px; }

/* plot style table editor */
.editor-body { display: flex; margin-top: 14px; padding: 0 22px 0 25px; height: 956px; }
.editor-main { flex: 1; padding-top: 20px; margin-right: 22px; }
.groups { display: flex; gap: 23px; }
.group-title, .details { font-family: "Open Sans", sans-serif; font-size: 22px; color: #444; line-height: 28px; }
.group-title { padding-left: 10px; }
.group-props { flex: 1; }
.group-props .group-title { padding-left: 14px; }
.list-box { width: 353px; height: 862px; border: 2px solid #a9a9a9; background: #fff; display: flex; overflow: hidden; }
.list { flex: 1; font-family: "Noto Sans", sans-serif; font-size: 28px; color: #000; }
.list li { height: 44px; display: flex; align-items: center; padding-left: 9px; }
.list i { width: 36px; height: 32px; border: 2px solid #41782c; margin-right: 17px; }
.list [aria-selected] { background: #0000f5; color: #fff; }
.track { width: 30px; background: #fafafa; border-left: 2px solid #e6e6e6; padding: 6px; }
.thumb { height: 60px; width: 16px; border-radius: 8px; background: #7f7f7f; }
.props { height: 862px; border: 2px solid #a9a9a9; border-radius: 10px; background: #e4e4e4; padding: 17px 0 0; display: grid; grid-template-columns: 290px 348px; column-gap: 15px; grid-template-rows: 59px 49px 56px 60px 59px 55px 64px 64px 64px 64px 60px 57px 100px; align-items: start; justify-items: start; color: #000; }
.props .lab, .props .check { font-family: "Noto Sans", sans-serif; font-size: 28px; }
.props .lab { justify-self: end; }
.props .check { grid-column: 2; height: 40px; padding-left: 4px; padding-bottom: 2px; font-size: 27px; }
.props .check input { width: 24px; height: 24px; margin-right: 13px; border-radius: 5px; }
.props .check input:checked { border: 0; background: url("data:image/svg+xml,%3Csvg xmlns='http://www.w3.org/2000/svg' width='20' height='20' fill='none' stroke='%23fff' stroke-width='3' stroke-linecap='round'%3E%3Cpath d='M5 11l4 5 7-12'/%3E%3C/svg%3E") no-repeat center, linear-gradient(#4c90f8, #3377f0); }
.props select { width: 348px; padding: 2px 0 0 16px; background-position: right 3px center; background-image: url("data:image/svg+xml,%3Csvg xmlns='http://www.w3.org/2000/svg' width='32' height='32' fill='none' stroke='%23fff' stroke-width='3'%3E%3Crect width='32' height='32' rx='8' fill='%233f82f4' stroke='none'/%3E%3Cpath d='M10 13l6-6 6 6M10 19l6 6 6-6'/%3E%3C/svg%3E"); }
.spin { width: 83px; height: 36px; margin: 2px 0 0 4px; padding-left: 6px; border-bottom: 1px solid #bbb; font-size: 23px; background: #fff url("data:image/svg+xml,%3Csvg xmlns='http://www.w3.org/2000/svg' width='20' height='28' fill='none' stroke='%23333' stroke-width='2'%3E%3Crect x='.5' y='.5' width='19' height='27' rx='7' stroke='%23ccc' stroke-width='1'/%3E%3Cpath d='M0 14h20' stroke='%23ccc'/%3E%3Cpath d='M6 10l4-4 4 4M6 18l4 4 4-4'/%3E%3C/svg%3E") no-repeat right 9px center; }
.spin-s { width: 69px; }
.props .lab-desc { height: 104px; }
.props textarea { width: 342px; height: 100px; background: #fff; border: 2px solid #999; border-top-color: #707070; resize: none; }
.details { display: flex; align-items: center; gap: 20px; height: 40px; margin-top: 5px; }
.tri-right { border: 9px solid transparent; border-left: 14px solid #c4c4c4; border-right: 0; }
.main-track { width: 26px; background: #fafafa; padding: 6px 4px 17px 6px; }
.main-thumb { height: 100%; border-radius: 8px; background: #c1c1c1; }
.rule { margin: 5px 32px 0 29px; border: 0; height: 2px; background: #d0d0d0; flex: none; }
.editor .actions { margin-top: 17px; padding: 0 40px 0 37px; }
```
